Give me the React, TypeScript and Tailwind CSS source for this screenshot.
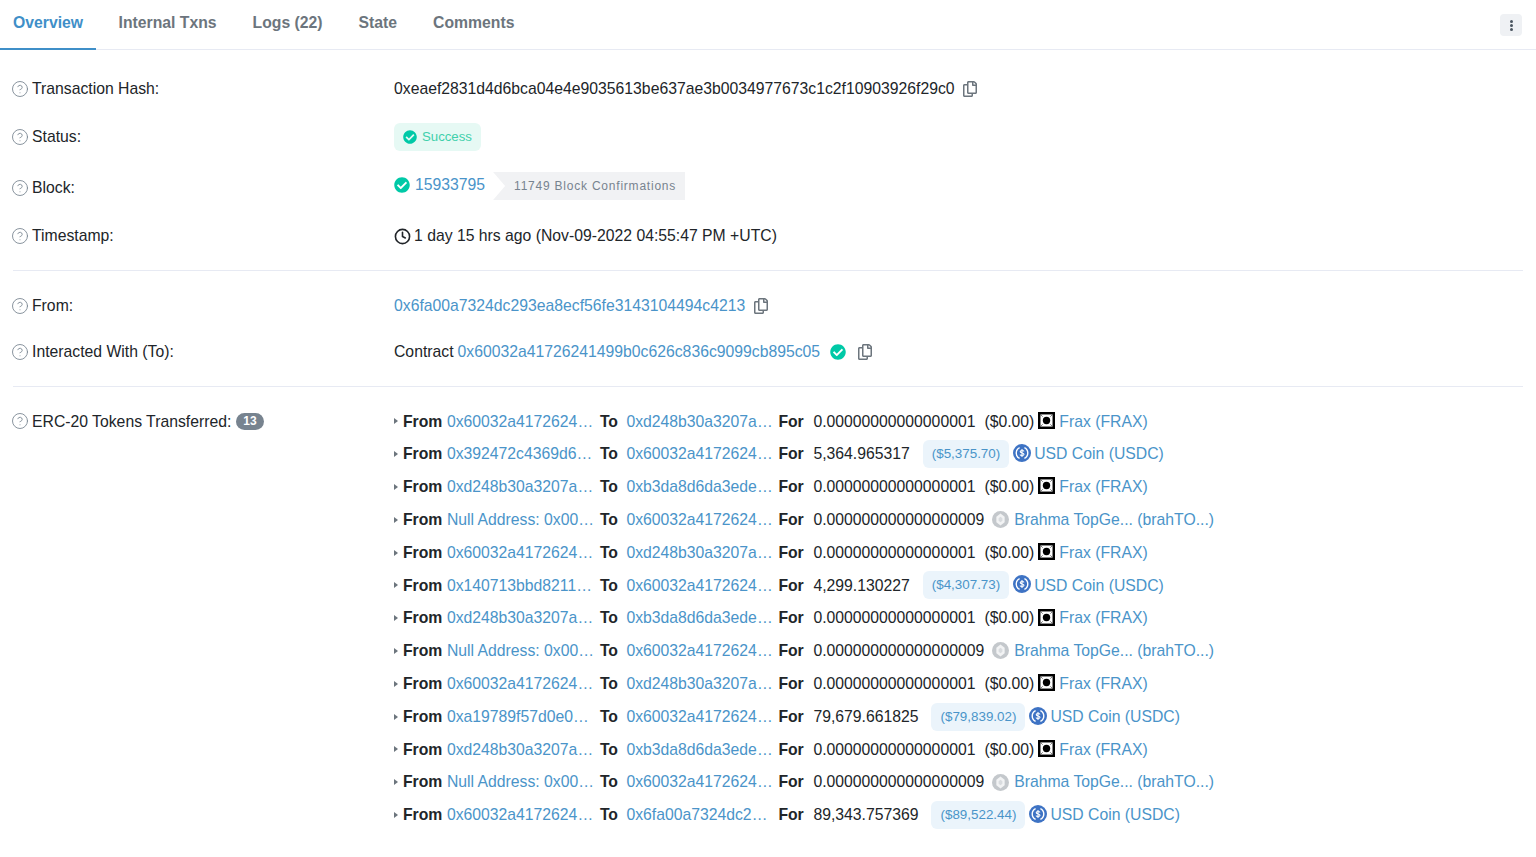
import { CircleHelp, Clock } from 'lucide-react';
import { FaCheckCircle, FaRegCopy } from 'react-icons/fa';

type Transfer = {
  from: string;
  to: string;
  amount: string;
  usd: string;
  token: 'frax' | 'usdc' | 'brahma';
};

const FRAX_ADDR = '0x60032a41726241499b0c626c836c9099cb895c05';
const POOL = '0xd248b30a3207a766d318c7a87f5cf334a439446d';
const SINK = '0xb3da8d6da3ede239ccbf576ca0eaa74d86f0e9d3';
const NULL_ADDR = 'Null Address: 0x000000000000000000000';
const TINY = '0.00000000000000001';
const BRAHMA = '0.000000000000000009';

const transfers: Transfer[] = [
  { from: FRAX_ADDR, to: POOL, amount: TINY, usd: '($0.00)', token: 'frax' },
  { from: '0x392472c4369d6a1f6f0ad6b0e6b2ed9c8a0b1c77', to: FRAX_ADDR, amount: '5,364.965317', usd: '($5,375.70)', token: 'usdc' },
  { from: POOL, to: SINK, amount: TINY, usd: '($0.00)', token: 'frax' },
  { from: NULL_ADDR, to: FRAX_ADDR, amount: BRAHMA, usd: '', token: 'brahma' },
  { from: FRAX_ADDR, to: POOL, amount: TINY, usd: '($0.00)', token: 'frax' },
  { from: '0x140713bbd8211c2f5ce5a8dd7a6fb0aa3c1e9d04', to: FRAX_ADDR, amount: '4,299.130227', usd: '($4,307.73)', token: 'usdc' },
  { from: POOL, to: SINK, amount: TINY, usd: '($0.00)', token: 'frax' },
  { from: NULL_ADDR, to: FRAX_ADDR, amount: BRAHMA, usd: '', token: 'brahma' },
  { from: FRAX_ADDR, to: POOL, amount: TINY, usd: '($0.00)', token: 'frax' },
  { from: '0xa19789f57d0e0a4f2a7b3de1c1f06ab5e7d29c11', to: FRAX_ADDR, amount: '79,679.661825', usd: '($79,839.02)', token: 'usdc' },
  { from: POOL, to: SINK, amount: TINY, usd: '($0.00)', token: 'frax' },
  { from: NULL_ADDR, to: FRAX_ADDR, amount: BRAHMA, usd: '', token: 'brahma' },
  { from: FRAX_ADDR, to: '0x6fa00a7324dc293ea8ecf56fe3143104494c4213', amount: '89,343.757369', usd: '($89,522.44)', token: 'usdc' },
];

function FraxIcon() {
  return (
    <svg viewBox="0 0 18 18" className="h-[17px] w-[17px] shrink-0 -translate-y-px">
      <rect width="18" height="18" fill="#000" />
      <rect x="2.6" y="2.6" width="12.8" height="12.8" fill="#fff" />
      <path d="M2.6 2.6 L5 5 M15.4 2.6 L13 5 M2.6 15.4 L5 13 M15.4 15.4 L13 13" stroke="#555" strokeWidth="0.8" />
      <circle cx="9" cy="9" r="3.9" fill="#000" />
    </svg>
  );
}

function UsdcIcon() {
  return (
    <svg viewBox="0 0 18 18" className="h-[18px] w-[18px] shrink-0 -translate-y-px">
      <circle cx="9" cy="9" r="9" fill="#3e73c4" />
      <path d="M6.6 3.6 A6 6 0 0 0 6.6 14.4 M11.4 3.6 A6 6 0 0 1 11.4 14.4" fill="none" stroke="#fff" strokeWidth="1.4" />
      <path d="M11 7.4 C10.6 6.3 7.2 6.1 7.2 7.8 C7.2 9.5 11 8.5 11 10.2 C11 11.9 7.4 11.7 7 10.6 M9 5 V13" fill="none" stroke="#fff" strokeWidth="1.1" />
    </svg>
  );
}

function BrahmaIcon() {
  return (
    <svg viewBox="0 0 18 18" className="h-[17px] w-[17px] shrink-0">
      <circle cx="9" cy="9" r="9" fill="#c4c8cc" />
      <path d="M9 2.6 L13.4 6 V12 L9 15.4 L4.6 12 V6 Z" fill="#f2f3f4" />
      <path d="M9 6 L11 7.8 V10.2 L9 12 L7 10.2 V7.8 Z" fill="#d9dcdf" />
    </svg>
  );
}

function TransferRow({ item }: { item: Transfer }) {
  const isUsdc = item.token === 'usdc';
  return (
    <div className="flex h-[32.8px] items-center">
      <span className="mr-[5px] h-0 w-0 border-y-[3.5px] border-l-[4px] border-y-transparent border-l-[#6c757d]" />
      <b className="mr-[4.5px] font-bold">From</b>
      <a className="w-[148px] truncate text-[#4a94c9]">{item.from}</a>
      <b className="ml-[5px] w-[26.5px] font-bold">To</b>
      <a className="w-[148px] truncate text-[#4a94c9]">{item.to}</a>
      <b className="ml-[4px] w-[35px] font-bold">For</b>
      <span>{item.amount}</span>
      {isUsdc && (
        <span className="mr-[4px] ml-[13px] rounded-md bg-[#ebf4fb] px-[9px] py-[5px] text-[13.4px] leading-[18px] text-[#4a94c9]">
          {item.usd}
        </span>
      )}
      {item.token === 'frax' && <span className="mr-[4px] ml-[9px]">{item.usd}</span>}
      {item.token === 'brahma' && <span className="mr-[8px]" />}
      {item.token === 'frax' && <FraxIcon />}
      {isUsdc && <UsdcIcon />}
      {item.token === 'brahma' && <BrahmaIcon />}
      {item.token === 'frax' && <a className="ml-[4px] text-[#4a94c9]">Frax (FRAX)</a>}
      {isUsdc && <a className="ml-[3px] text-[#4a94c9]">USD Coin (USDC)</a>}
      {item.token === 'brahma' && <a className="ml-[5px] text-[#4a94c9]">Brahma TopGe... (brahTO...)</a>}
    </div>
  );
}

function HelpIcon() {
  return <CircleHelp size={18} strokeWidth={1.15} className="mr-[3px] -ml-[2px] shrink-0 text-[#77838f]" />;
}

function Label({ children }: { children: React.ReactNode }) {
  return (
    <div className="flex w-[381px] shrink-0 items-center">
      <HelpIcon />
      {children}
    </div>
  );
}

function CopyIcon({ className }: { className: string }) {
  return <FaRegCopy size={16} className={`text-[#6c757d] ${className}`} />;
}

export default function App() {
  const tabs = ['Internal Txns', 'Logs (22)', 'State', 'Comments'];

  return (
    <div className="h-[857px] overflow-hidden bg-white font-['Liberation_Sans',Arial,sans-serif] text-[15.75px] text-[#212529]">
      <div className="flex h-[50px] items-start border-b border-[#e7eaf3] pr-[14px]">
        <div className="flex h-[50px] w-[96px] items-start border-b-2 border-[#3f8fc8] pt-[11px] pl-[13px] font-bold text-[#3f8fc8]">
          Overview
        </div>
        <div className="ml-[22.5px] flex gap-[36px] pt-[11px] font-bold text-[#6c757d]">
          {tabs.map((tab) => (
            <span key={tab}>{tab}</span>
          ))}
        </div>
        <button className="mt-[14px] ml-auto flex h-[22px] w-[22px] items-center justify-center rounded bg-[#eff1f4]">
          <span className="flex flex-col gap-px">
            <span className="h-[3px] w-[3px] rounded-full bg-[#4a5560]" />
            <span className="h-[3px] w-[3px] rounded-full bg-[#4a5560]" />
            <span className="h-[3px] w-[3px] rounded-full bg-[#4a5560]" />
          </span>
        </button>
      </div>

      <div className="px-[13px] pt-[15px]">
        <div className="flex h-[48px] items-center">
          <Label>Transaction Hash:</Label>
          <span>0xeaef2831d4d6bca04e4e9035613be637ae3b0034977673c1c2f10903926f29c0</span>
          <CopyIcon className="ml-[7px]" />
        </div>
        <div className="flex h-[48px] items-center">
          <Label>Status:</Label>
          <span className="flex h-[28px] items-center rounded-md bg-[#e6f9f4] px-[9px] text-[13.2px] text-[#3fd0ab]">
            <FaCheckCircle size={14} className="mr-[5px] text-[#00c9a7]" />
            Success
          </span>
        </div>
        <div className="flex h-[54px] items-center">
          <Label>Block:</Label>
          <span className="flex -translate-y-[2px] items-center">
            <FaCheckCircle size={16} className="mr-[5px] -translate-y-px text-[#00c9a7]" />
            <a className="-translate-y-px text-[#4a94c9]">15933795</a>
            <span className="ml-[8px] flex h-[28px] items-center bg-[#f1f2f4] pr-[9px] pl-[21px] text-[12px] tracking-[0.78px] text-[#77838f] [clip-path:polygon(0_0,100%_0,100%_100%,0_100%,12px_50%)]">
              11749 Block Confirmations
            </span>
          </span>
        </div>
        <div className="flex h-[42px] items-center">
          <Label>Timestamp:</Label>
          <Clock size={17} strokeWidth={2.3} className="mr-[3px] text-[#212529]" />
          <span>1 day 15 hrs ago (Nov-09-2022 04:55:47 PM +UTC)</span>
        </div>

        <hr className="mt-[13px] mb-[12px] border-[#e7eaf3]" />

        <div className="flex h-[46px] items-center">
          <Label>From:</Label>
          <a className="text-[#4a94c9]">0x6fa00a7324dc293ea8ecf56fe3143104494c4213</a>
          <CopyIcon className="ml-[8px]" />
        </div>
        <div className="flex h-[46px] items-center">
          <Label>Interacted With (To):</Label>
          <span className="mr-[4px]">Contract</span>
          <a className="text-[#4a94c9]">{FRAX_ADDR}</a>
          <FaCheckCircle size={16} className="ml-[10px] text-[#00c9a7]" />
          <CopyIcon className="ml-[11px]" />
        </div>

        <hr className="mt-[11px] mb-[18px] border-[#e7eaf3]" />

        <div className="flex items-start">
          <div className="flex h-[32.8px] w-[381px] shrink-0 items-center">
            <HelpIcon />
            ERC-20 Tokens Transferred:
            <span className="ml-[5px] rounded-full bg-[#77838f] px-[7px] text-[12px] leading-[17px] font-bold text-white">13</span>
          </div>
          <div className="flex-1">
            {transfers.map((item, i) => (
              <TransferRow key={i} item={item} />
            ))}
          </div>
        </div>
      </div>
    </div>
  );
}
